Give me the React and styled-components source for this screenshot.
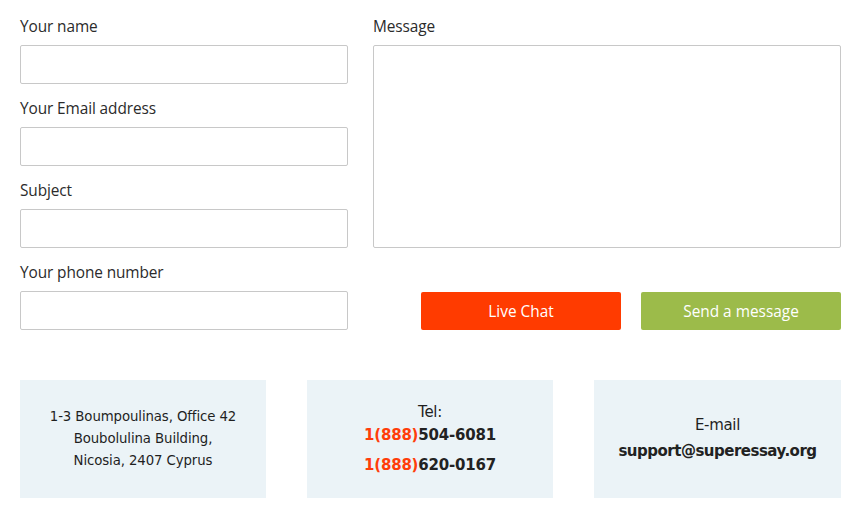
import React from "react";
import styled, { createGlobalStyle } from "styled-components";

const Global = createGlobalStyle`
  html, body { margin: 0; padding: 0; background: #fff; }
  * { box-sizing: border-box; }
`;

const Page = styled.div`
  padding: 16px 20px 20px;
  font-family: "Open Sans", sans-serif;
`;

const Form = styled.div`
  display: grid;
  grid-template-columns: 328px 468px;
  column-gap: 25px;
`;

const Column = styled.div`
  display: flex;
  flex-direction: column;
`;

const Field = styled.div`
  display: flex;
  flex-direction: column;
  margin-bottom: ${(p) => (p.$last ? 0 : 14)}px;
`;

const Label = styled.label`
  font-size: 15.4px;
  line-height: 22px;
  color: #2b2b2b;
  margin-bottom: 7px;
  letter-spacing: -0.1px;
`;

const Input = styled.input`
  height: 39px;
  border: 1px solid #c8c8c8;
  border-radius: 2px;
  background: #fff;
  outline: none;
`;

const TextArea = styled.textarea`
  height: 203px;
  border: 1px solid #c8c8c8;
  border-radius: 2px;
  resize: none;
  outline: none;
`;

const Buttons = styled.div`
  margin-top: auto;
  display: flex;
  justify-content: flex-end;
  gap: 20px;
`;

const Button = styled.button`
  width: 200px;
  height: 38px;
  border: none;
  border-radius: 2px;
  background: ${(p) => p.$bg};
  color: #fff;
  font-family: "Open Sans", sans-serif;
  font-size: 15.4px;
  font-weight: 500;
  cursor: pointer;
`;

const Info = styled.div`
  margin-top: 50px;
  display: grid;
  grid-template-columns: 246px 246px 247px;
  justify-content: space-between;
`;

const Card = styled.div`
  height: 118px;
  background: #ebf3f7;
  display: flex;
  flex-direction: column;
  align-items: center;
  justify-content: center;
  text-align: center;
  font-family: "DejaVu Sans", sans-serif;
  color: #1f1f1f;
`;

const Address = styled.div`
  font-size: 13.3px;
  line-height: 22px;
  letter-spacing: -0.1px;
`;

const Plain = styled.div`
  font-size: 15px;
  line-height: 22px;
  letter-spacing: -0.3px;
`;

const Strong = styled.div`
  font-size: 15px;
  font-weight: bold;
  line-height: ${(p) => p.$lh || 26}px;
  margin-top: ${(p) => p.$mt || 0}px;
  color: #222;
  letter-spacing: ${(p) => p.$ls || -0.2}px;
`;

const Red = styled.span`
  color: #ff3d0a;
`;

export default function App() {
  return (
    <Page>
      <Global />
      <Form>
        <Column>
          <Field>
            <Label>Your name</Label>
            <Input />
          </Field>
          <Field>
            <Label>Your Email address</Label>
            <Input />
          </Field>
          <Field>
            <Label>Subject</Label>
            <Input />
          </Field>
          <Field $last>
            <Label>Your phone number</Label>
            <Input />
          </Field>
        </Column>
        <Column>
          <Field>
            <Label>Message</Label>
            <TextArea />
          </Field>
          <Buttons>
            <Button $bg="#ff3b00">Live Chat</Button>
            <Button $bg="#9cbb4a">Send a message</Button>
          </Buttons>
        </Column>
      </Form>
      <Info>
        <Card>
          <Address>
            1-3 Boumpoulinas, Office 42
            <br />
            Boubolulina Building,
            <br />
            Nicosia, 2407 Cyprus
          </Address>
        </Card>
        <Card>
          <Plain>Tel:</Plain>
          <Strong $lh={24}>
            <Red>1(888)</Red>504-6081
          </Strong>
          <Strong $lh={24} $mt={6}>
            <Red>1(888)</Red>620-0167
          </Strong>
        </Card>
        <Card>
          <Plain>E-mail</Plain>
          <Strong $lh={26} $mt={2} $ls={-0.5}>
            support@superessay.org
          </Strong>
        </Card>
      </Info>
    </Page>
  );
}
